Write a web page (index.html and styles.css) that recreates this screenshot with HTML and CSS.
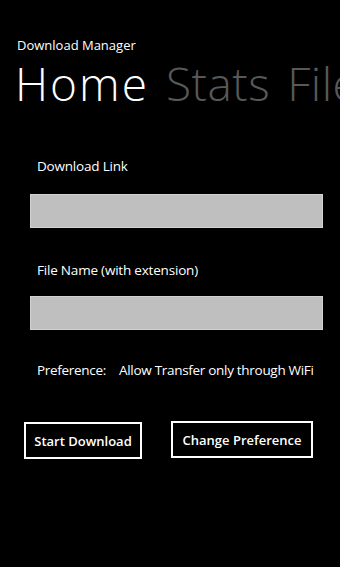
FILE: index.html
```html
<!DOCTYPE html>
<html lang="en">
<head>
  <meta charset="UTF-8" />
  <meta name="viewport" content="width=device-width, initial-scale=1.0"/>
  <title>Download Manager</title>
  <link rel="stylesheet" href="styles.css">
</head>
<body>

  <div class="app">
    <div class="app-title">Download Manager</div>
    <div class="pivot">
      <span class="pivot-item active">Home</span>
      <span class="pivot-item">Stats</span>
      <span class="pivot-item">Files</span>
    </div>

    <div class="content">
      <div class="field">
        <label class="field-label" for="link">Download Link</label>
        <input type="text" id="link" class="field-input" />
      </div>
      <div class="field">
        <label class="field-label" for="filename">File Name (with extension)</label>
        <input type="text" id="filename" class="field-input" />
      </div>

      <div class="preference">
        <span class="pref-label">Preference:</span>
        <span class="pref-value">Allow Transfer only through WiFi</span>
      </div>

      <div class="actions">
        <button class="btn btn-start">Start Download</button>
        <button class="btn btn-pref">Change Preference</button>
      </div>
    </div>
  </div>

</body>
</html>
```

FILE: styles.css
```css
* {
  margin: 0;
  padding: 0;
  box-sizing: border-box;
  font-family: 'Open Sans', 'Noto Sans', sans-serif;
}

body {
  background-color: #000;
  color: #fff;
  width: 340px;
  height: 567px;
  overflow: hidden;
}

.app {
  padding-top: 36px;
}

.app-title {
  padding-left: 17px;
  font-size: 13px;
  line-height: 18px;
}

.pivot {
  display: flex;
  gap: 17px;
  padding-left: 15px;
  margin-top: 1px;
  white-space: nowrap;
  overflow: hidden;
  font-size: 46px;
  font-weight: 300;
  line-height: 56px;
}

.pivot-item {
  color: #585858;
  letter-spacing: 0.5px;
}

.pivot-item.active {
  color: #fff;
  letter-spacing: 2px;
}

.content {
  display: flex;
  flex-direction: column;
  padding: 0 17px 0 30px;
  margin-top: 45px;
}

.field {
  display: flex;
  flex-direction: column;
  margin-bottom: 32px;
}

.field + .field {
  margin-bottom: 30px;
}

.field-label {
  padding-left: 7px;
  font-size: 13.5px;
  letter-spacing: -0.2px;
  line-height: 20px;
  margin-bottom: 18px;
}

.field + .field .field-label {
  margin-bottom: 16px;
}

.field-input {
  width: 293px;
  height: 34px;
  background: #bfbfbf;
  border: 1px solid #d2d2d2;
  outline: none;
}

.preference {
  display: flex;
  gap: 13px;
  padding-left: 7px;
  font-size: 13.5px;
  letter-spacing: -0.3px;
  line-height: 20px;
  white-space: nowrap;
}

.actions {
  display: flex;
  align-items: flex-start;
  gap: 29px;
  margin-top: 42px;
  margin-left: -6px;
}

.btn {
  height: 37px;
  background: #000;
  color: #fff;
  border: 2px solid #fff;
  font-size: 13px;
  font-weight: 600;
  cursor: pointer;
}

.btn-start {
  width: 118px;
}

.btn-pref {
  width: 142px;
  margin-top: -1px;
}
```
